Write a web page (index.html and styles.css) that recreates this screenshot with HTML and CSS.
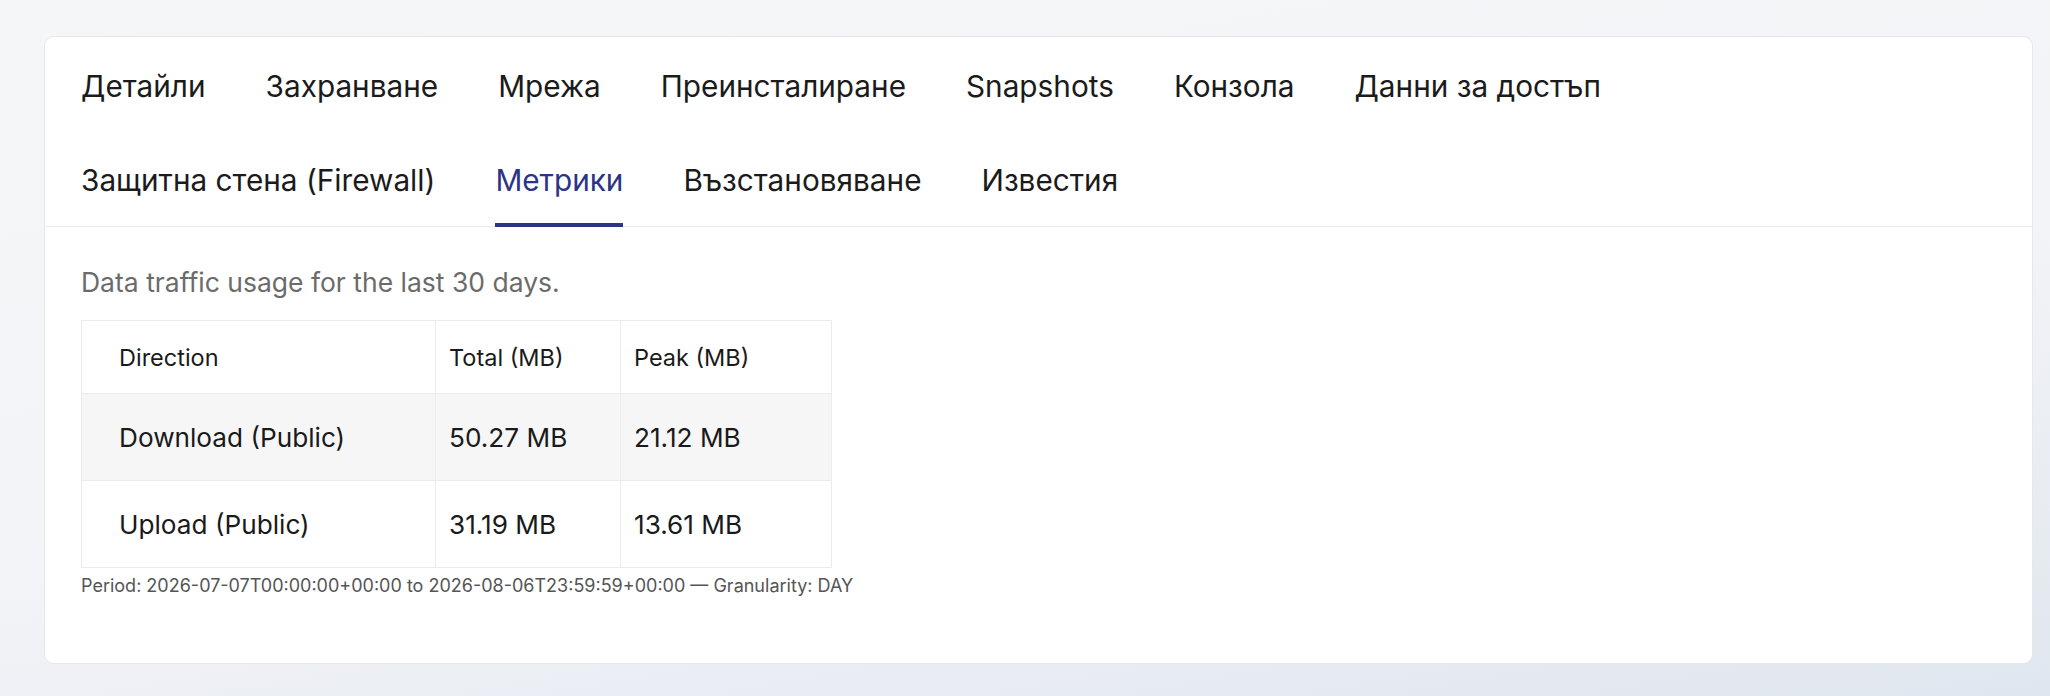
FILE: index.html
```html
<!DOCTYPE html>
<html lang="bg">
<head>
  <meta charset="UTF-8" />
  <meta name="viewport" content="width=device-width, initial-scale=1.0"/>
  <title>Метрики</title>
  <link rel="stylesheet" href="styles.css">
</head>
<body>
  <div class="server-card">
    <nav class="tabs">
      <a href="#" class="tab">Детайли</a>
      <a href="#" class="tab">Захранване</a>
      <a href="#" class="tab">Мрежа</a>
      <a href="#" class="tab">Преинсталиране</a>
      <a href="#" class="tab">Snapshots</a>
      <a href="#" class="tab">Конзола</a>
      <a href="#" class="tab">Данни за достъп</a>
      <a href="#" class="tab">Защитна стена (Firewall)</a>
      <a href="#" class="tab active">Метрики</a>
      <a href="#" class="tab">Възстановяване</a>
      <a href="#" class="tab">Известия</a>
    </nav>

    <div class="tab-body">
      <p class="intro">Data traffic usage for the last 30 days.</p>

      <table class="traffic">
        <thead>
          <tr>
            <th class="col-dir">Direction</th>
            <th class="col-total">Total (MB)</th>
            <th class="col-peak">Peak (MB)</th>
          </tr>
        </thead>
        <tbody>
          <tr>
            <td>Download (Public)</td>
            <td>50.27 MB</td>
            <td>21.12 MB</td>
          </tr>
          <tr>
            <td>Upload (Public)</td>
            <td>31.19 MB</td>
            <td>13.61 MB</td>
          </tr>
        </tbody>
      </table>

      <p class="period">Period: 2026-07-07T00:00:00+00:00 to 2026-08-06T23:59:59+00:00 — Granularity: DAY</p>
    </div>
  </div>
</body>
</html>
```

FILE: styles.css
```css
* {
  box-sizing: border-box;
  margin: 0;
  padding: 0;
}

html, body {
  height: 100%;
}

body {
  font-family: Inter, "Noto Sans", Arial, sans-serif;
  color: #1a1a1a;
  background: linear-gradient(170deg, #f5f6f8 0%, #f3f4f7 55%, #e0e6ef 100%);
  padding: 36px 17px 32px 44px;
}

.server-card {
  background-color: #fff;
  border: 1px solid #e6e8ec;
  border-radius: 10px;
  min-height: 628px;
}

/* tab strip */
.tabs {
  display: flex;
  flex-wrap: wrap;
  column-gap: 60px;
  row-gap: 2px;
  padding: 3px 36px 0;
  border-bottom: 1px solid #ebecef;
}

.tab {
  display: block;
  padding: 29px 0 26px;
  font-size: 29.75px;
  line-height: 34px;
  color: #1b1b1b;
  text-decoration: none;
  border-bottom: 4px solid transparent;
  margin-bottom: -1px;
}

.tab.active {
  color: #2c3487;
  border-bottom-color: #2d3580;
}

/* metrics panel */
.tab-body {
  padding: 39px 36px 40px;
}

.intro {
  font-size: 26.5px;
  color: #6b6b6b;
  margin-bottom: 22px;
}

.traffic {
  border-collapse: collapse;
  width: 750px;
  table-layout: fixed;
}

.traffic th,
.traffic td {
  border: 1px solid #ececec;
  text-align: left;
  padding: 0 13px;
}

.traffic th {
  font-weight: 400;
  font-size: 23.5px;
  height: 73px;
}

.traffic td {
  font-size: 26.2px;
  height: 87px;
}

.traffic th:first-child,
.traffic td:first-child {
  padding-left: 37px;
}

.col-dir { width: 354px; }
.col-total { width: 185px; }
.col-peak { width: 211px; }

.traffic tbody tr:nth-child(odd) {
  background-color: #f6f6f6;
}

.period {
  font-size: 18px;
  color: #555;
  margin-top: 7px;
}
```
